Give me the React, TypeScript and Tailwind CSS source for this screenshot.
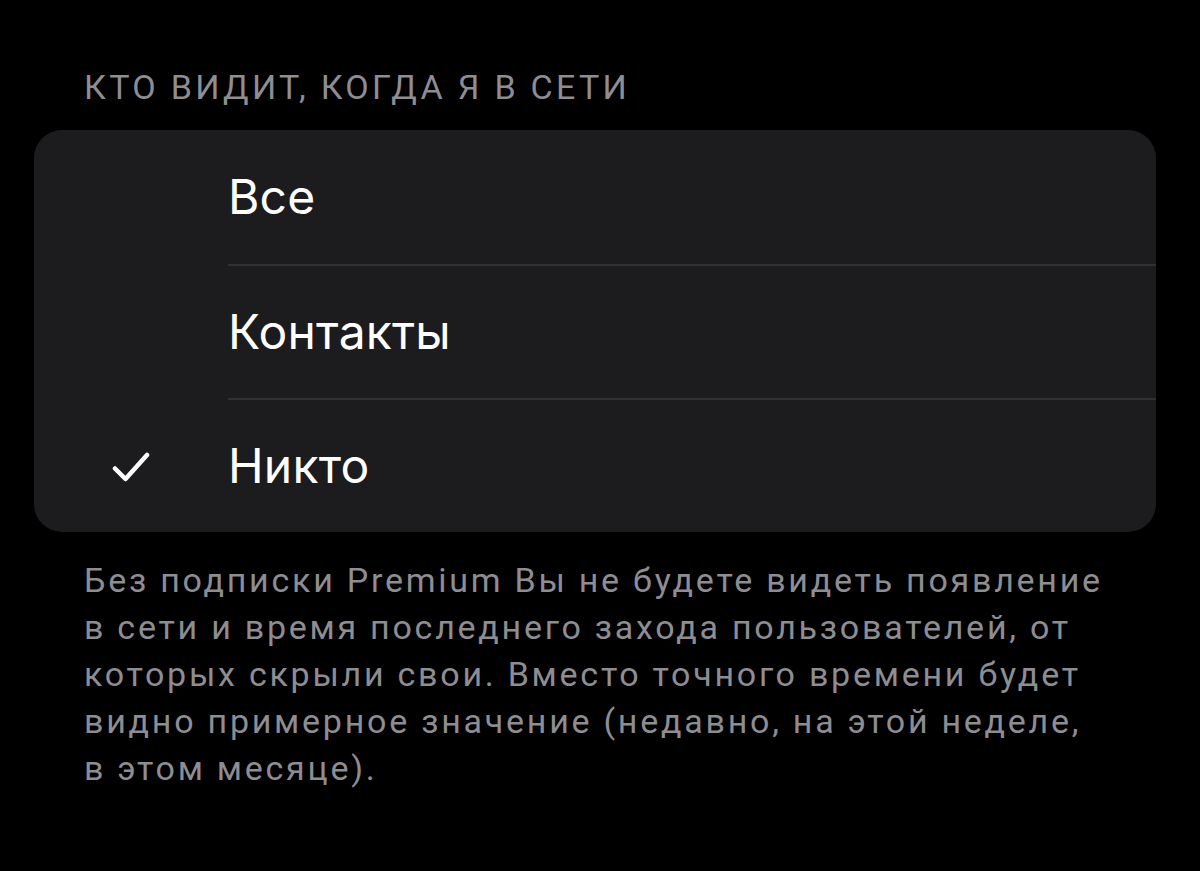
import React from "react";

const rows = [
  { label: "Все", checked: false },
  { label: "Контакты", checked: false },
  { label: "Никто", checked: true },
];

const footer = [
  "Без подписки Premium Вы не будете видеть появление",
  "в сети и время последнего захода пользователей, от",
  "которых скрыли свои. Вместо точного времени будет",
  "видно примерное значение (недавно, на этой неделе,",
  "в этом месяце).",
];

export default function App() {
  return (
    <div
      className="w-[1200px] h-[871px] bg-black overflow-hidden"
      style={{ fontFamily: "Inter, 'Noto Sans', sans-serif" }}
    >
      <div className="pt-[67px] pl-[34px] pr-[44px]">
        <div
          className="pl-[50px] text-[34px] leading-[40px] text-[#8d8d92] tracking-[3.3px] uppercase whitespace-nowrap"
          style={{ fontFamily: "Roboto, 'Noto Sans', sans-serif" }}
        >
          Кто видит, когда я в сети
        </div>
        <div className="mt-[23px] bg-[#1c1c1e] rounded-[28px] overflow-hidden">
          {rows.map((r, i) => (
            <div key={r.label} className="flex h-[134px]">
              <div className="w-[194px] flex items-center justify-center pt-[4px]">
                {r.checked && (
                  <svg width="38" height="32" viewBox="0 0 38 32" fill="none">
                    <path
                      d="M3 17.5 L13.5 28 L35 4"
                      stroke="#ffffff"
                      strokeWidth="4.5"
                      strokeLinecap="round"
                      strokeLinejoin="round"
                    />
                  </svg>
                )}
              </div>
              <div
                className={`flex-1 flex items-center ${
                  i > 0 ? "border-t-2 border-[#313133]" : ""
                }`}
              >
                <span className="text-[48px] leading-none text-white tracking-[0.2px]">
                  {r.label}
                </span>
              </div>
            </div>
          ))}
        </div>
        <div
          className="mt-[25px] pl-[50px] text-[34px] leading-[47px] text-[#8d8d92] tracking-[2.75px] whitespace-nowrap"
          style={{ fontFamily: "Roboto, 'Noto Sans', sans-serif" }}
        >
          {footer.map((l) => (
            <div key={l}>{l}</div>
          ))}
        </div>
      </div>
    </div>
  );
}
